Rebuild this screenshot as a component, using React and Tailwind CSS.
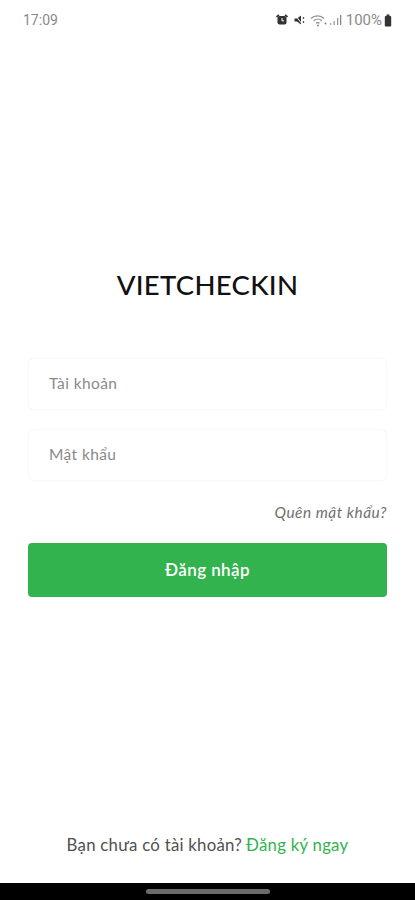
import React from "react";

const StatusIcons = () => (
  <div className="flex items-center">
    {/* alarm */}
    <svg width="12" height="12" viewBox="0 0 12 12" className="mr-[6px]">
      <rect x="1.5" y="2" width="9" height="8.5" rx="2" fill="#333" />
      <path d="M0.5 3 L3 0.8 M11.5 3 L9 0.8" stroke="#333" strokeWidth="1.6" />
      <path d="M6 4 V6.8 H8" stroke="#fff" strokeWidth="1" fill="none" />
    </svg>
    {/* muted */}
    <svg width="12" height="12" viewBox="0 0 12 12" className="mr-[4px]">
      <path d="M0.5 4.5 H3 L7 1.5 V10.5 L3 7.5 H0.5 Z" fill="#333" />
      <path d="M1.5 1.5 L8.5 10.5" stroke="#fff" strokeWidth="1" />
      <path d="M9.5 3 V5 M9.5 7 V9" stroke="#555" strokeWidth="1.3" />
    </svg>
    {/* wifi */}
    <svg width="17" height="13" viewBox="0 0 17 13" className="mr-[2px]" fill="none">
      <path d="M1 4.5 C4.5 1 10.5 1 14 4.5" stroke="#8a8a8a" strokeWidth="1.2" />
      <path d="M3.5 7 C6 4.6 9.5 4.6 12 7" stroke="#9a9a9a" strokeWidth="1.2" />
      <path d="M6 9.3 C7 8.4 8.5 8.4 9.5 9.3" stroke="#8a8a8a" strokeWidth="1.2" />
      <circle cx="15.5" cy="9.5" r="0.9" fill="#777" />
      <circle cx="8" cy="11.5" r="0.9" fill="#777" />
    </svg>
    {/* signal */}
    <svg width="13" height="12" viewBox="0 0 13 12" className="mr-[4px]">
      <rect x="1" y="9" width="1.3" height="2" fill="#aaa" />
      <rect x="4.5" y="7" width="1.3" height="4" fill="#999" />
      <rect x="8" y="4" width="1.3" height="7" fill="#999" />
      <rect x="11" y="1" width="1.3" height="10" fill="#888" />
    </svg>
    <span className="text-[15px] leading-none font-['Roboto',sans-serif] text-[#8a8a8a]">100%</span>
    {/* battery */}
    <svg width="8" height="13" viewBox="0 0 8 13" className="ml-[2px]">
      <rect x="2.5" y="0.5" width="3" height="2" fill="#333" />
      <rect x="0.8" y="2" width="6.4" height="10.5" rx="1" fill="#333" />
    </svg>
  </div>
);

const Field = ({ label }) => (
  <div className="h-[52px] flex items-center pl-[20px] bg-white border border-[#f8f8f8] rounded-[6px] shadow-[0_0_3px_rgba(0,0,0,0.03)]">
    <span className="text-[15.5px] tracking-[0.4px] text-[#8a8a8a]">{label}</span>
  </div>
);

export default function App() {
  return (
    <div className="w-[415px] h-[900px] flex flex-col bg-white font-['Lato',sans-serif]">
      <div className="h-[40px] flex items-center justify-between pl-[23px] pr-[23px] shrink-0">
        <span className="text-[14px] leading-none font-['Roboto',sans-serif] text-[#8a8a8a]">17:09</span>
        <StatusIcons />
      </div>

      <div className="flex-1 flex flex-col px-[28px]">
        <h1 className="mt-[226px] h-[38px] flex items-center justify-center text-[27.5px] font-medium tracking-[0.3px] text-[#111111]">
          VIETCHECKIN
        </h1>

        <div className="mt-[54px] flex flex-col gap-[19px]">
          <Field label="Tài khoản" />
          <Field label="Mật khẩu" />
        </div>

        <p className="mt-[22px] h-[20px] flex items-center justify-end text-[15.4px] italic tracking-[0.5px] text-[#707070]">
          Quên mật khẩu?
        </p>

        <button className="mt-[20px] h-[54px] w-full rounded-[4px] bg-[#32b34d] text-white text-[17px] font-semibold tracking-[0.4px]">
          Đăng nhập
        </button>

        <div className="mt-auto mb-[26px] flex justify-center text-[16.8px] tracking-[0.25px] text-[#505050]">
          <span>Bạn chưa có tài khoản?</span>
          <span className="ml-[4px] text-[#32b34d]">Đăng ký ngay</span>
        </div>
      </div>

      <div className="h-[17px] shrink-0 bg-black flex items-center justify-center">
        <div className="w-[124px] h-[5px] rounded-full bg-[#6b6b6b]" />
      </div>
    </div>
  );
}
